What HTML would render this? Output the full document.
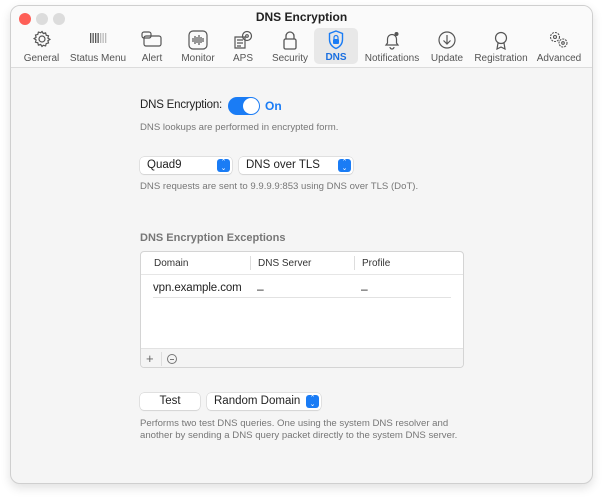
<!DOCTYPE html>
<html><head><meta charset="utf-8"><style>
*{margin:0;padding:0;box-sizing:border-box}
body{width:602px;height:500px;background:#fff;font-family:"Liberation Sans",sans-serif;position:relative;overflow:hidden}
.win{position:absolute;left:10px;top:5px;width:583px;height:479px;background:#f5f5f5;border:1px solid #cfcfcf;border-radius:10px;box-shadow:0 4px 10px rgba(0,0,0,.12);overflow:hidden}
.tb{position:absolute;left:0;top:0;width:100%;height:62px;background:#fafafa;border-bottom:1px solid #dcdcdc}
.dot{position:absolute;top:7px;width:12px;height:12px;border-radius:50%;background:#dcdcdc}
.title{position:absolute;top:4px;left:0;width:100%;text-align:center;font-size:12px;font-weight:bold;color:#222}
.it{position:absolute;top:22px;height:37px;text-align:center;font-size:10px;color:#555}
.it svg{position:absolute;left:50%;transform:translateX(-50%);top:2px}
.it span{position:absolute;bottom:1px;left:0;width:100%;white-space:nowrap}
.a{position:absolute;white-space:nowrap}
.g{color:#777;font-size:9.6px}
.pop{position:absolute;height:17px;background:#fff;border-radius:4px;box-shadow:0 0 0 .5px #ccc,0 1px 1px rgba(0,0,0,.1);font-size:11.5px;color:#222;padding-left:7px;line-height:17px}
.pop i{position:absolute;right:2px;top:2px;width:13px;height:13px;background:#1a7cf5;border-radius:3px;color:#fff;font-size:7px;line-height:6px;text-align:center;font-style:normal;padding-top:1px}
</style></head><body>
<div class="win">
<div class="tb">
<div class="dot" style="left:8px;background:#fe5f57"></div>
<div class="dot" style="left:25px"></div>
<div class="dot" style="left:42px"></div>
<div class="title">DNS Encryption</div>
<div class="it" style="left:8px;width:45px"><svg width="18" height="18" viewBox="0 0 18 18" fill="none" stroke="#555" stroke-width="1.2"><circle cx="9" cy="9" r="3"/><path d="M9 1.5l1.3 2 2.3-.6.6 2.3 2.3.6-.6 2.3 2 1.3-2 1.3.6 2.3-2.3.6-.6 2.3-2.3-.6L9 16.5l-1.3-2-2.3.6-.6-2.3-2.3-.6.6-2.3-2-1.3 2-1.3-.6-2.3 2.3-.6.6-2.3 2.3.6z"/></svg><span>General</span></div>
<div class="it" style="left:55px;width:64px"><svg width="20" height="16" viewBox="0 0 20 16"><g fill="#555"><rect x="2" y="3" width="1.3" height="10"/><rect x="4.5" y="3" width="1.3" height="10"/><rect x="7" y="3" width="1.3" height="10"/><rect x="9.5" y="3" width="1.3" height="10"/></g><g fill="#bbb"><rect x="12" y="3" width="1.3" height="10"/><rect x="14.5" y="3" width="1.3" height="10"/><rect x="17" y="3" width="1.3" height="10"/></g></svg><span>Status Menu</span></div>
<div class="it" style="left:125px;width:32px"><svg width="22" height="18" viewBox="0 0 22 18" fill="none" stroke="#555" stroke-width="1.2"><rect x="1" y="2" width="9" height="6" rx="2"/><rect x="3" y="6" width="17" height="10" rx="2"/></svg><span>Alert</span></div>
<div class="it" style="left:167px;width:40px"><svg width="20" height="20" viewBox="0 0 20 20" fill="none" stroke="#555" stroke-width="1.2"><rect x="1" y="1" width="18" height="18" rx="4"/><path d="M5 8v4M7 6v8M9 7v6M11 5v10M13 7v6M15 8v4"/></svg><span>Monitor</span></div>
<div class="it" style="left:217px;width:30px"><svg width="20" height="20" viewBox="0 0 20 20" fill="none" stroke="#555" stroke-width="1.2"><path d="M2 7h10v11H2zM4 10h6M4 13h6M4 16h4"/><circle cx="14" cy="6" r="4.5"/><circle cx="14" cy="6" r="1.3"/></svg><span>APS</span></div>
<div class="it" style="left:258px;width:42px"><svg width="16" height="20" viewBox="0 0 16 20" fill="none" stroke="#555" stroke-width="1.3"><path d="M4 9V6a4 4 0 018 0v3"/><rect x="2" y="9" width="12" height="10" rx="1.5"/></svg><span>Security</span></div>
<div class="it" style="left:303px;width:44px;height:36px;top:22px;background:#e8e8e8;border-radius:5px;color:#1a6fe0;font-weight:bold"><svg width="16" height="20" viewBox="0 0 16 20"><path d="M8 1l6.5 2.5v6c0 4.5-3 7.5-6.5 9-3.5-1.5-6.5-4.5-6.5-9v-6z" fill="none" stroke="#1a7cf5" stroke-width="1.4"/><rect x="5" y="9" width="6" height="5" rx="1" fill="#1a7cf5"/><path d="M6 9V7.5a2 2 0 014 0V9" fill="none" stroke="#1a7cf5" stroke-width="1.2"/></svg><span>DNS</span></div>
<div class="it" style="left:350px;width:62px"><svg width="20" height="20" viewBox="0 0 20 20" fill="none" stroke="#555" stroke-width="1.2"><path d="M4 15h12l-1.5-2V9a4.5 4.5 0 00-9 0v4zM8 17a2 2 0 004 0"/><circle cx="14.5" cy="4" r="2" fill="#555" stroke="none"/></svg><span>Notifications</span></div>
<div class="it" style="left:416px;width:40px"><svg width="20" height="20" viewBox="0 0 20 20" fill="none" stroke="#555" stroke-width="1.2"><circle cx="10" cy="10" r="8"/><path d="M10 5v9M6.5 10.5L10 14l3.5-3.5"/></svg><span>Update</span></div>
<div class="it" style="left:460px;width:60px"><svg width="18" height="20" viewBox="0 0 18 20" fill="none" stroke="#555" stroke-width="1.2"><circle cx="9" cy="8" r="5.5"/><path d="M6 13l-1 6 4-2 4 2-1-6"/></svg><span>Registration</span></div>
<div class="it" style="left:522px;width:52px"><svg width="22" height="20" viewBox="0 0 22 20" fill="none" stroke="#555" stroke-width="1.1"><circle cx="7" cy="7" r="4.5" stroke-dasharray="2 1"/><circle cx="7" cy="7" r="1.5"/><circle cx="15" cy="13" r="4" stroke-dasharray="2 1"/><circle cx="15" cy="13" r="1.3"/></svg><span>Advanced</span></div>
</div>
</div>

<div class="a" style="left:140px;top:99px;font-size:11.5px;letter-spacing:-0.2px;color:#222">DNS Encryption:</div>
<div class="a" style="left:228px;top:97px;width:32px;height:18px;background:#1a7cf5;border-radius:9px"><div style="position:absolute;right:1px;top:1px;width:16px;height:16px;background:#fff;border-radius:50%"></div></div>
<div class="a" style="left:265px;top:99px;font-size:12px;color:#1a7cf5;font-weight:bold">On</div>
<div class="a g" style="left:140px;top:122px">DNS lookups are performed in encrypted form.</div>

<div class="pop" style="left:140px;top:157px;width:92px">Quad9<i>⌃<br>⌄</i></div>
<div class="pop" style="left:239px;top:157px;width:114px">DNS over TLS<i>⌃<br>⌄</i></div>
<div class="a g" style="left:140px;top:181px">DNS requests are sent to 9.9.9.9:853 using DNS over TLS (DoT).</div>

<div class="a" style="left:140px;top:232px;font-size:11px;font-weight:bold;color:#777">DNS Encryption Exceptions</div>
<div class="a" style="left:140px;top:251px;width:324px;height:117px;background:#fff;border:1px solid #d4d4d4;border-radius:4px;overflow:hidden">
<div class="a" style="left:13px;top:6px;font-size:10px;color:#333">Domain</div>
<div class="a" style="left:109px;top:4px;width:1px;height:14px;background:#ddd"></div>
<div class="a" style="left:117px;top:6px;font-size:10px;color:#333">DNS Server</div>
<div class="a" style="left:213px;top:4px;width:1px;height:14px;background:#ddd"></div>
<div class="a" style="left:221px;top:6px;font-size:10px;color:#333">Profile</div>
<div class="a" style="left:0;top:22px;width:100%;height:1px;background:#e6e6e6"></div>
<div class="a" style="left:12px;top:30px;font-size:11.5px;letter-spacing:-0.1px;color:#222">vpn.example.com</div>
<div class="a" style="left:116px;top:30px;font-size:12px;color:#222">–</div>
<div class="a" style="left:220px;top:30px;font-size:12px;color:#222">–</div>
<div class="a" style="left:12px;top:45px;width:298px;height:1px;background:#e2e2e2"></div>
<div class="a" style="left:0;top:96px;width:100%;height:21px;background:#f4f4f4;border-top:1px solid #e2e2e2"></div>
<div class="a" style="left:5px;top:99px;font-size:13px;color:#666">+</div>
<div class="a" style="left:20px;top:100px;width:1px;height:14px;background:#ddd"></div>
<div class="a" style="left:26px;top:102px;width:10px;height:10px;border:1px solid #777;border-radius:50%"><div style="position:absolute;left:2px;top:3.5px;width:4px;height:1px;background:#777"></div></div>
</div>

<div class="pop" style="left:140px;top:393px;width:60px;padding:0;text-align:center">Test</div>
<div class="pop" style="left:207px;top:393px;width:114px">Random Domain<i>⌃<br>⌄</i></div>
<div class="a g" style="left:140px;top:418px;line-height:12px">Performs two test DNS queries. One using the system DNS resolver and<br>another by sending a DNS query packet directly to the system DNS server.</div>
</body></html>
